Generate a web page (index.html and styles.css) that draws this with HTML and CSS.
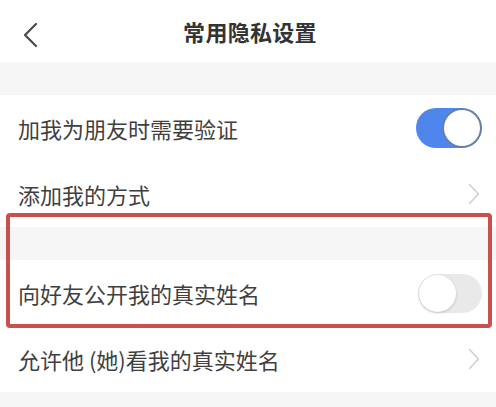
FILE: index.html
```html
<!DOCTYPE html>
<html lang="zh">
<head>
<meta charset="utf-8">
<link rel="stylesheet" href="styles.css">
</head>
<body>
<div class="page">
  <header class="header">
    <svg class="back" width="16" height="26" viewBox="0 0 16 26"><path d="M14 2 L3 13 L14 24" fill="none" stroke="#4a4a4a" stroke-width="2.2" stroke-linecap="round" stroke-linejoin="round"/></svg>
    <div class="title">常用隐私设置</div>
  </header>
  <div class="gap"></div>
  <div class="row divided">
    <span class="label">加我为朋友时需要验证</span>
    <span class="switch on"><span class="knob"></span></span>
  </div>
  <div class="row">
    <span class="label">添加我的方式</span>
    <svg class="chev" width="12" height="22" viewBox="0 0 12 22"><path d="M1.5 1.5 L10.5 11 L1.5 20.5" fill="none" stroke="#cfcfcf" stroke-width="1.6" stroke-linecap="round" stroke-linejoin="round"/></svg>
  </div>
  <div class="gap"></div>
  <div class="row">
    <span class="label">向好友公开我的真实姓名</span>
    <span class="switch off"><span class="knob"></span></span>
  </div>
  <div class="row">
    <span class="label">允许他 (她)看我的真实姓名</span>
    <svg class="chev" width="12" height="22" viewBox="0 0 12 22"><path d="M1.5 1.5 L10.5 11 L1.5 20.5" fill="none" stroke="#cfcfcf" stroke-width="1.6" stroke-linecap="round" stroke-linejoin="round"/></svg>
  </div>
  <div class="gap tail"></div>
  <div class="highlight"></div>
</div>
</body>
</html>
```
FILE: styles.css
```css
* { box-sizing: border-box; }
html, body { margin: 0; padding: 0; background: #fff; }
body { font-family: "Noto Sans CJK SC", "Noto Sans", sans-serif; color: #3a3a3a; }
.page { position: relative; width: 496px; height: 407px; overflow: hidden; }
.header { height: 62px; position: relative; display: flex; align-items: center; justify-content: center; }
.back { position: absolute; left: 22px; top: 22px; }
.title { font-size: 22px; font-weight: 700; color: #333; letter-spacing: 0.3px; margin-left: 4px; }
.gap { height: 33px; background: #f6f6f6; }
.gap.tail { height: 20px; }
.row { height: 66px; display: flex; align-items: center; justify-content: space-between; padding: 0 14px 0 18px; }
.label { font-size: 22px; color: #3f3f3f; letter-spacing: 0; line-height: 1; }
.chev { margin-right: 2px; }
.switch { width: 66px; height: 40px; border-radius: 20px; position: relative; display: block; }
.switch.on { background: #4e86ec; }
.switch.off { background: #e9e9e9; width: 64px; height: 39px; }
.knob { position: absolute; top: 2px; width: 36px; height: 36px; border-radius: 50%; background: #fff; }
.switch.on .knob { right: 2px; box-shadow: 0 0 0 1.5px #6b7c99; }
.switch.off .knob { left: 1px; top: 1px; width: 37px; height: 37px; box-shadow: 0 1px 3px rgba(0,0,0,0.18); }
.highlight { position: absolute; left: 6px; top: 213px; width: 486px; height: 115px; border: 4px solid #c9504d; border-radius: 4px; }
```
